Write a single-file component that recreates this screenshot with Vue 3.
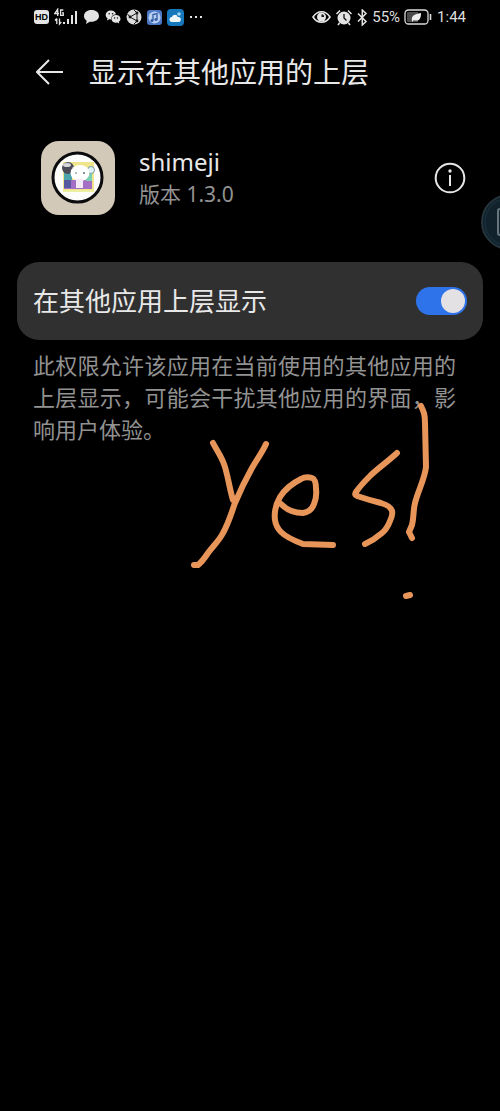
<template>
  <div class="screen">
    <div class="status-bar">
      <div class="status-left">
        <span class="hd">HD</span>
        <svg class="signal" width="24" height="18" viewBox="0 0 24 18">
          <g fill="none" stroke="#e4e4e4" stroke-width="1.300">
            <path d="M3.700 8V1.200L.8 5.500H5M9.300 2H6.600V7.300H9.300V4.800H8" />
            <path d="M2.800 10.500V16M1 12.500l1.800-2M5.500 10.500V16L7.300 14" />
          </g>
          <path d="M9 14h2v2H9zM13 11h2v5h-2zM17 7h2v9h-2zM21 3h2v13h-2z" fill="#e4e4e4" />
        </svg>
        <svg class="chat" width="17" height="16" viewBox="0 0 17 16">
          <path d="M8.500 1C4 1 1 3.600 1 7c0 2 1 3.700 2.700 4.700L3 15l3.700-2.300c5 .7 9.300-2 9.300-5.700C16 3.600 13 1 8.500 1z" fill="#e4e4e4" />
        </svg>
        <svg class="wechat" width="16" height="16" viewBox="0 0 16 16">
          <path d="M6 1.500C3 1.500.7 3.400.7 6c0 1.400.7 2.500 1.800 3.300L2 11.500l2.300-1.200 2 .2C6 7.300 8 5.400 11 5.200 10.500 3 8.500 1.500 6 1.500z" fill="#e4e4e4" />
          <path d="M11 6c-2.500 0-4.500 1.700-4.500 3.900s2 3.800 4.500 3.800l1.300-.2 2 1.100-.5-1.800c1-.7 1.700-1.700 1.700-2.900C15.500 7.700 13.500 6 11 6z" fill="#e4e4e4" />
          <g fill="#111">
            <circle cx="4.200" cy="4.700" r=".8" />
            <circle cx="7.600" cy="4.700" r=".8" />
            <circle cx="9.600" cy="9" r=".7" />
            <circle cx="12.500" cy="9" r=".7" />
          </g>
        </svg>
        <svg class="browser" width="16" height="16" viewBox="0 0 16 16">
          <circle cx="8" cy="8" r="7.500" fill="#dcdcdc" />
          <path d="M4 8l7-4v8zM4 8L1.500 5M11 4L8 1M11 12l-3 3" fill="none" stroke="#151515" stroke-width="1" />
          <g fill="#151515">
            <circle cx="4" cy="8" r="1.400" />
            <circle cx="11" cy="4" r="1.400" />
            <circle cx="11" cy="12" r="1.400" />
          </g>
        </svg>
        <svg class="music" width="15" height="15" viewBox="0 0 15 15">
          <rect width="15" height="15" rx="3" fill="#4d78c4" />
          <circle cx="7.500" cy="7.500" r="6" fill="#b8cef0" />
          <path d="M6 10.500V4.500l4-1v6" fill="none" stroke="#315ca8" stroke-width="1.300" />
          <circle cx="5" cy="10.500" r="1.500" fill="#315ca8" />
          <circle cx="9" cy="9.500" r="1.500" fill="#315ca8" />
        </svg>
        <svg class="weather" width="17" height="17" viewBox="0 0 17 17">
          <rect width="17" height="17" rx="4" fill="#1677bd" />
          <circle cx="12" cy="5" r="1.800" fill="#9ed5f2" />
          <path d="M5 13a2.500 2.500 0 010-5c1-3 5-3 5.700 0 3.800-1 4.300 5 .8 5z" fill="#eef6fa" />
        </svg>
        <svg class="more" width="14" height="4" viewBox="0 0 14 4">
          <path d="M1 1h2v2H1zM6 1h2v2H6zM11 1h2v2h-2z" fill="#e4e4e4" />
        </svg>
      </div>
      <div class="status-right">
        <svg width="19" height="14" viewBox="0 0 19 14">
          <path d="M1 7c4.500-7 12.500-7 17 0-4.500 7-12.500 7-17 0z" fill="none" stroke="#e4e4e4" stroke-width="1.600" />
          <circle cx="9.500" cy="7" r="4.500" fill="#e4e4e4" />
          <path d="M9.500 4.200a2.500 2.500 0 012.500 2.800H9.500z" fill="#111" />
        </svg>
        <svg width="18" height="17" viewBox="0 0 18 17">
          <circle cx="9" cy="9" r="6.500" fill="#e4e4e4" />
          <path d="M1.500 5l3.500-3.500M16.500 5L13 1.500M4.500 14L3 16M13.500 14l1.500 2" stroke="#e4e4e4" stroke-width="1.600" />
          <path d="M9 5v4l2.500 2.500" fill="none" stroke="#111" stroke-width="1.300" />
        </svg>
        <svg width="11" height="17" viewBox="0 0 11 17">
          <path d="M1 4.500l8 8-3.700 3.500V1L9 4.500l-8 8" fill="none" stroke="#e4e4e4" stroke-width="1.500" />
        </svg>
        <span class="percent">55%</span>
        <svg class="battery" width="29" height="16" viewBox="0 0 29 16">
          <rect x="1" y="1" width="23" height="14" rx="3.500" fill="none" stroke="#dcdcdc" stroke-width="1.300" />
          <path d="M4 3h10v10H4a1 1 0 01-1-1V4a1 1 0 011-1z" fill="#4c4c4c" />
          <path d="M8 12c-1-5 2-7 9-8 0 6-2 9-7 7l4-4-6 6z" fill="#eee" />
          <path d="M26.500 5v6" stroke="#dcdcdc" stroke-width="1.600" />
        </svg>
        <span class="clock">1:44</span>
      </div>
    </div>

    <header class="title-bar">
      <button class="back" type="button" aria-label="返回">
        <svg width="28" height="26" viewBox="0 0 28 26">
          <path d="M13 1L1 13l12 12M1 13h26" fill="none" stroke="#e8e8e8" stroke-width="2" />
        </svg>
      </button>
      <h1>显示在其他应用的上层</h1>
    </header>

    <section class="app-row">
      <svg class="app-icon" width="76" height="76" viewBox="0 0 76 76">
        <rect x="1" y="1" width="74" height="74" rx="18" fill="#d2c9b8" />
        <circle cx="37.500" cy="37.500" r="24.500" fill="#fdfdfb" stroke="#0b0a0d" stroke-width="3" />
        <rect x="23" y="22" width="31" height="30" fill="#eee58c" />
        <path d="M24 29h8v13h-8z" fill="#4ba5ab" />
        <path d="M24 40h28v9H24z" fill="#a56fc6" />
        <path d="M24 40h7v8h-7z" fill="#55599f" />
        <path d="M46 32h6v9h-6z" fill="#78cfb4" />
        <path d="M23 51h31" stroke="#edf0a1" stroke-width="2" />
        <circle cx="28" cy="28" r="6" fill="#4b4b59" />
        <ellipse cx="27" cy="25" rx="4" ry="2" fill="#d5d5dd" />
        <circle cx="51" cy="30" r="3.500" fill="#dff2f4" stroke="#7b9aa4" />
        <ellipse cx="40" cy="33" rx="9.500" ry="8" fill="#fff" />
        <path d="M36 39h7v9h-7z" fill="#f4e9f7" />
        <circle cx="36" cy="33" r="1" fill="#8dabb2" />
        <circle cx="44" cy="33" r="1" fill="#55737d" />
      </svg>
      <div class="app-text">
        <div class="app-name">shimeji</div>
        <div class="app-version">版本 1.3.0</div>
      </div>
      <button class="info" type="button" aria-label="应用信息">
        <svg width="32" height="32" viewBox="0 0 32 32">
          <circle cx="16" cy="16" r="14.300" fill="none" stroke="#e6e6e6" stroke-width="2" />
          <circle cx="16" cy="9" r="1.700" fill="#e6e6e6" />
          <path d="M16 13v11" stroke="#e6e6e6" stroke-width="2" />
        </svg>
      </button>
    </section>

    <div class="card">
      <label for="overlay">在其他应用上层显示</label>
      <input id="overlay" v-model="allowed" type="checkbox" class="switch">
    </div>

    <p class="hint">此权限允许该应用在当前使用的其他应用的上层显示，可能会干扰其他应用的界面，影响用户体验。</p>

    <!-- floating assistive button, half off the edge -->
    <div class="bubble">
      <svg width="20" height="56" viewBox="0 0 20 56">
        <circle cx="29" cy="28" r="27" fill="#11222c" stroke="#26343c" stroke-width="2" />
        <circle cx="29" cy="28" r="24" fill="none" stroke="#1d3542" stroke-width="1" />
        <path d="M24 15h-4a2 2 0 00-2 2v22a2 2 0 002 2h4" fill="none" stroke="#68757c" stroke-width="2" />
      </svg>
    </div>

    <!-- finger drawing -->
    <svg class="doodle" width="244" height="200" viewBox="188 402 244 200">
      <path v-for="(d, i) in strokes" :key="i" :d="d" />
    </svg>
  </div>
</template>

<script setup>
import { ref } from 'vue';

const allowed = ref(true);

const strokes = [
  'M213 443C217 451 222 457 225 467C229 481 230 491 233 500',
  'M266 444C262 453 257 459 252 468Q242 486 235 503C231 514 229 522 223 533C219 541 213 546 208 553Q202 562 198 565L194 565',
  'M281 504C286 509 294 513 303 513Q311 512 314 504Q317 497 316 489C316 482 315 479 312 478Q306 476 301 479C291 484 285 489 280 497C276 504 274 512 275 520Q276 527 281 532C287 538 295 541 303 544L333 545',
  'M397 453C386 463 377 469 370 476C364 482 360 486 356 492Q354 495 357 496Q369 500 381 503Q391 506 392 511Q393 515 390 521Q387 529 382 533Q374 540 365 544',
  'M421 406C424 412 425 415 425 423L426 467C425 478 418 491 415 503C413 511 414 517 412 525L409 532L412 538',
  'M406 596L410 595'
];
</script>

<style>
html, body { margin: 0; background: #000; }
</style>

<style scoped>
.screen { position: relative; min-height: 100vh; overflow: hidden; background: #000; color: #e8e8e8; font-family: "Noto Sans", "Noto Sans CJK SC", sans-serif; }
.screen svg { display: block; flex: none; }
button { padding: 0; border: none; background: none; cursor: pointer; }

.status-bar { display: flex; justify-content: space-between; align-items: center; height: 34px; padding: 0 34px; }
.status-left, .status-right { display: flex; align-items: center; }
.status-left { gap: 5px; }
.status-right { gap: 4px; }
.hd { width: 15px; height: 14px; border-radius: 3px; background: #e4e4e4; color: #000; font: bold 9px/14px "Liberation Sans", sans-serif; text-align: center; }
.percent, .clock { font-family: Roboto, sans-serif; font-size: 15px; line-height: 20px; color: #dedede; }

.title-bar { display: flex; align-items: center; gap: 25px; height: 76px; padding: 0 36px; }
h1 { margin: 0; font-size: 28px; line-height: 40px; font-weight: 400; white-space: nowrap; }

.app-row { display: flex; align-items: center; height: 76px; margin-top: 30px; padding: 0 34px 0 40px; }
.app-text { flex: 1; padding-left: 23px; }
.app-name { font-size: 24px; line-height: 32px; }
.app-version { font-size: 21px; line-height: 32px; color: #929292; }

.card { display: flex; align-items: center; justify-content: space-between; height: 78px; margin: 46px 17px 0; padding: 0 16px; border-radius: 22px; background: #303030; }
.card label { font-size: 26px; line-height: 36px; }
.switch { appearance: none; display: flex; align-items: center; justify-content: flex-end; box-sizing: border-box; width: 51px; height: 28px; margin: 0; padding: 2px; border-radius: 14px; background: #2f73ea; cursor: pointer; }
.switch::before { content: ""; width: 24px; height: 24px; border-radius: 50%; background: #e4e1e4; }
.switch:not(:checked) { justify-content: flex-start; background: #666; }

.hint { margin: 9px 44px 0 33px; font-size: 22px; line-height: 32px; color: #929292; text-align: justify; }

.bubble { position: absolute; top: 194px; right: 0; }
.doodle { position: absolute; top: 402px; left: 188px; fill: none; stroke: #e8955a; stroke-width: 6; stroke-linecap: round; stroke-linejoin: round; pointer-events: none; }
</style>
